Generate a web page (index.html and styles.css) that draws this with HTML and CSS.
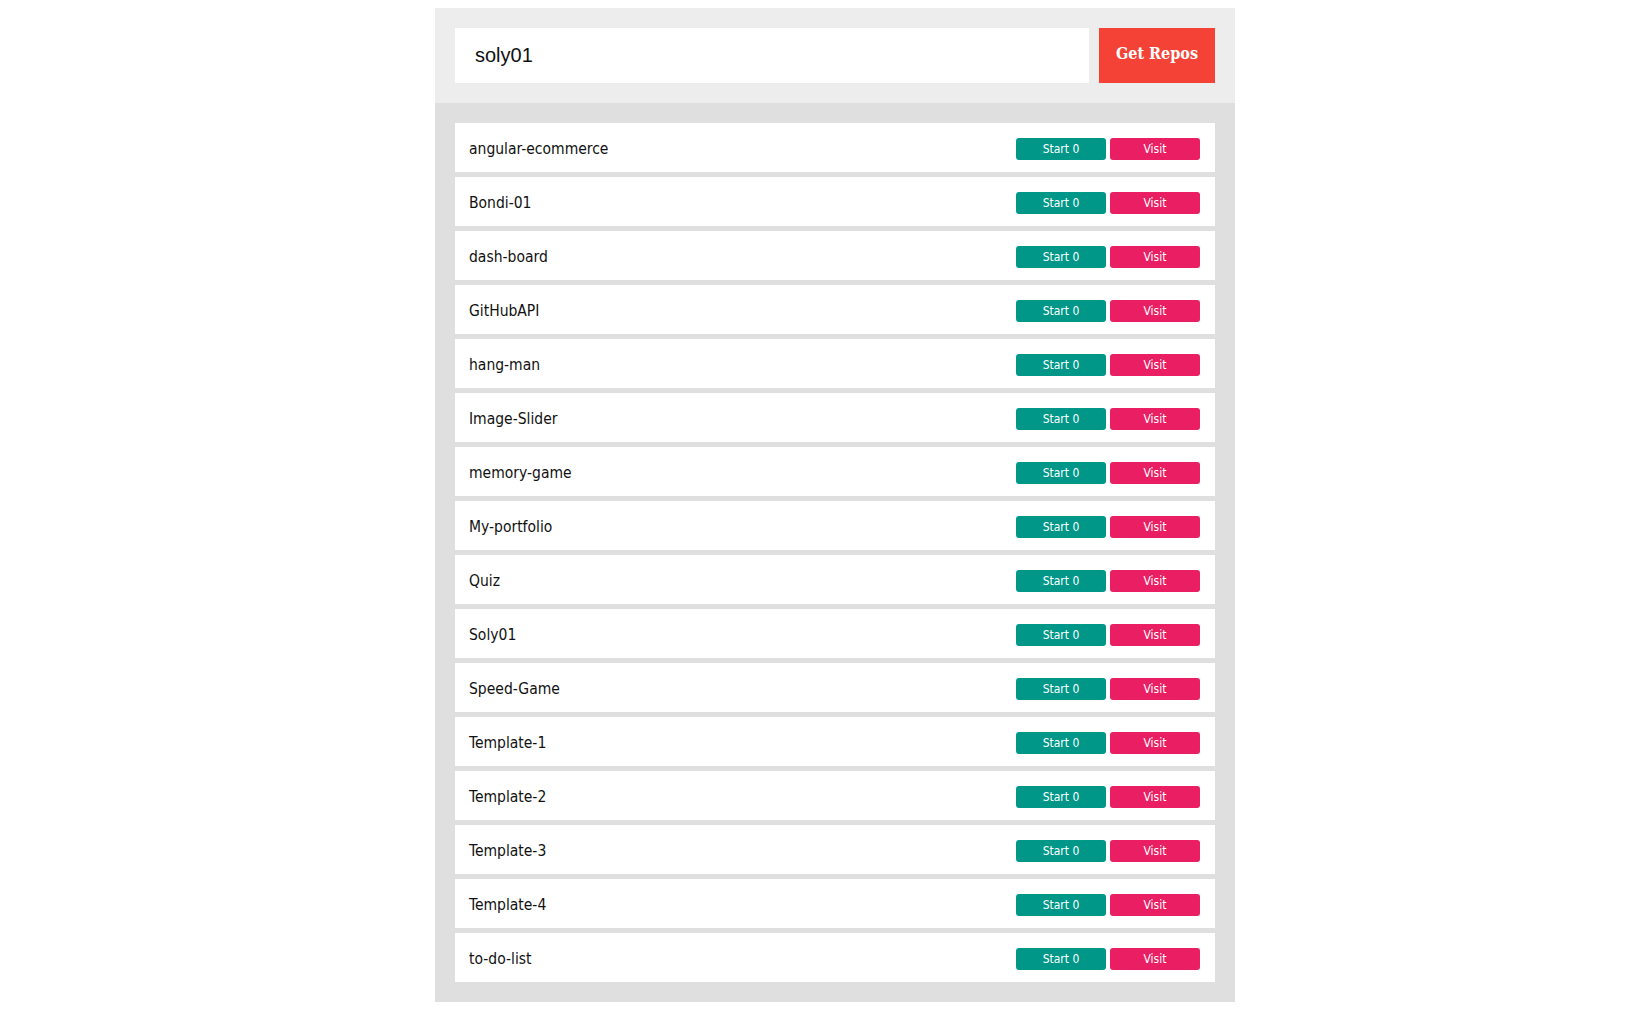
FILE: index.html
```html
<!DOCTYPE html>
<html>
<head>
<meta charset="utf-8">
<link rel="stylesheet" href="styles.css">
</head>
<body>
<div class="container">
  <div class="get-repos">
    <div class="input">soly01</div>
    <div class="btn-get">Get Repos</div>
  </div>
  <div class="show-data">
    <div class="repo"><span class="name">angular-ecommerce</span><div class="actions"><span class="stars">Start 0</span><span class="visit">Visit</span></div></div>
    <div class="repo"><span class="name">Bondi-01</span><div class="actions"><span class="stars">Start 0</span><span class="visit">Visit</span></div></div>
    <div class="repo"><span class="name">dash-board</span><div class="actions"><span class="stars">Start 0</span><span class="visit">Visit</span></div></div>
    <div class="repo"><span class="name">GitHubAPI</span><div class="actions"><span class="stars">Start 0</span><span class="visit">Visit</span></div></div>
    <div class="repo"><span class="name">hang-man</span><div class="actions"><span class="stars">Start 0</span><span class="visit">Visit</span></div></div>
    <div class="repo"><span class="name">Image-Slider</span><div class="actions"><span class="stars">Start 0</span><span class="visit">Visit</span></div></div>
    <div class="repo"><span class="name">memory-game</span><div class="actions"><span class="stars">Start 0</span><span class="visit">Visit</span></div></div>
    <div class="repo"><span class="name">My-portfolio</span><div class="actions"><span class="stars">Start 0</span><span class="visit">Visit</span></div></div>
    <div class="repo"><span class="name">Quiz</span><div class="actions"><span class="stars">Start 0</span><span class="visit">Visit</span></div></div>
    <div class="repo"><span class="name">Soly01</span><div class="actions"><span class="stars">Start 0</span><span class="visit">Visit</span></div></div>
    <div class="repo"><span class="name">Speed-Game</span><div class="actions"><span class="stars">Start 0</span><span class="visit">Visit</span></div></div>
    <div class="repo"><span class="name">Template-1</span><div class="actions"><span class="stars">Start 0</span><span class="visit">Visit</span></div></div>
    <div class="repo"><span class="name">Template-2</span><div class="actions"><span class="stars">Start 0</span><span class="visit">Visit</span></div></div>
    <div class="repo"><span class="name">Template-3</span><div class="actions"><span class="stars">Start 0</span><span class="visit">Visit</span></div></div>
    <div class="repo"><span class="name">Template-4</span><div class="actions"><span class="stars">Start 0</span><span class="visit">Visit</span></div></div>
    <div class="repo"><span class="name">to-do-list</span><div class="actions"><span class="stars">Start 0</span><span class="visit">Visit</span></div></div>
  </div>
</div>
</body>
</html>
```
FILE: styles.css
```css
* { box-sizing: border-box; }
body {
  margin: 8px;
  background: #fff;
  font-family: "DejaVu Sans Condensed", "DejaVu Sans", sans-serif;
}
.container {
  width: 800px;
  margin-left: 427px;
}
.get-repos {
  background: #ededed;
  padding: 20px;
  display: flex;
  gap: 10px;
}
.input {
  flex: 1;
  height: 55px;
  background: #fff;
  padding-left: 20px;
  display: flex;
  align-items: center;
  font-family: "Liberation Sans", Arial, sans-serif;
  font-size: 20px;
  color: #111;
}
.btn-get {
  width: 116px;
  height: 55px;
  background: #f44336;
  color: #fff;
  font-family: "DejaVu Serif Condensed", "DejaVu Serif", serif;
  font-weight: bold;
  font-size: 16px;
  display: flex;
  align-items: center;
  justify-content: center;
  padding-bottom: 5px;
}
.show-data {
  background: #dfdfdf;
  padding: 20px;
  display: flex;
  flex-direction: column;
  gap: 5px;
}
.repo {
  height: 49px;
  background: #fff;
  display: flex;
  align-items: center;
  justify-content: space-between;
  padding: 3px 15px 0 14px;
}
.name {
  font-size: 15.5px;
  color: #111;
}
.actions {
  display: flex;
  gap: 4px;
}
.stars, .visit {
  width: 90px;
  height: 22px;
  border-radius: 3px;
  color: #fff;
  font-size: 12px;
  display: flex;
  align-items: center;
  justify-content: center;
}
.stars { background: #009688; }
.visit { background: #e91e63; }
```
